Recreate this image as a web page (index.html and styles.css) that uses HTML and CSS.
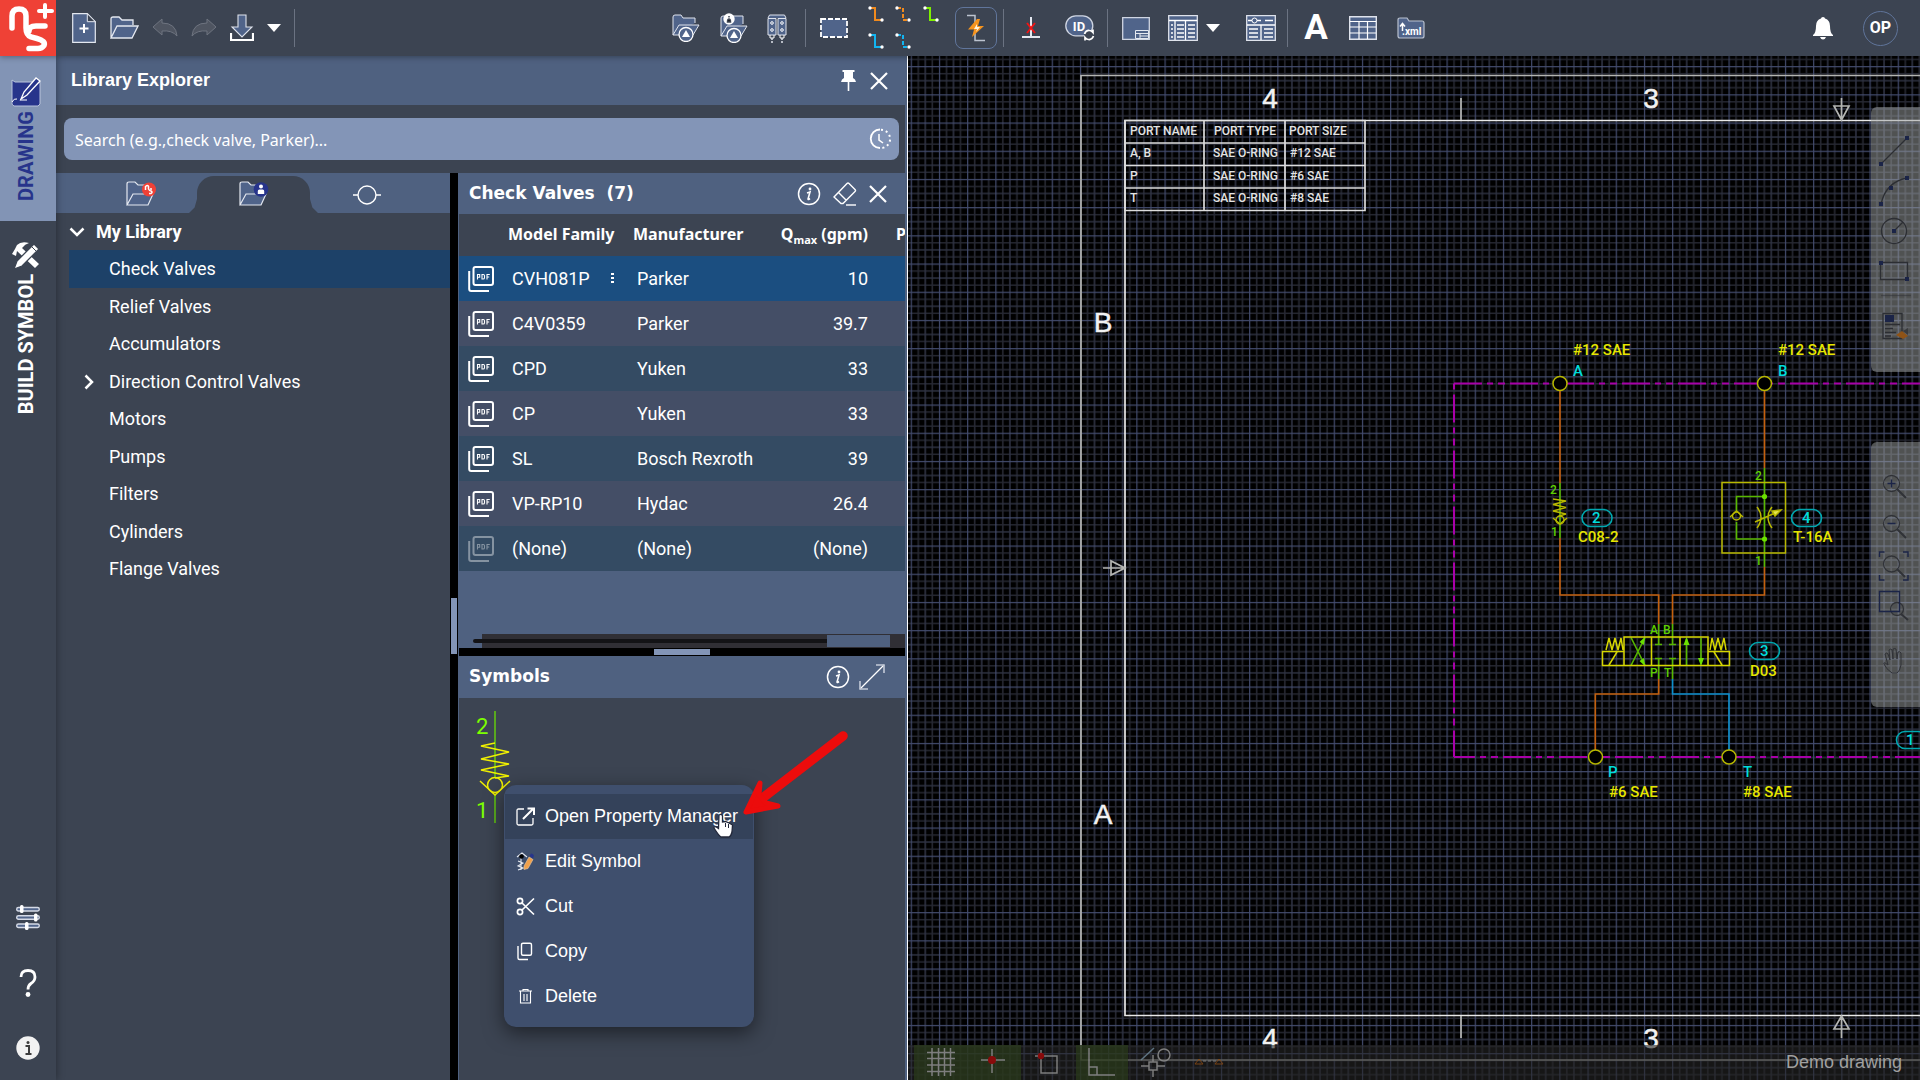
FILE: index.html
```html
<!DOCTYPE html>
<html lang="en">
<head>
<meta charset="utf-8">
<title>Demo drawing</title>
<link rel="stylesheet" href="styles.css">
</head>
<body>
<svg class="defs" aria-hidden="true">
  <symbol id="i-folder" viewBox="0 0 30 24"><path d="M2 22V3q0-2 2-2h6l3 3h11v5M2 22L8 10h21l-6 12z" fill="#50648a" stroke="#e4e8f0" stroke-width="1.3"/></symbol>
  <symbol id="i-x" viewBox="0 0 18 18"><path d="M1 1l16 16M17 1L1 17" stroke="#fff" stroke-width="2.2" fill="none"/></symbol>
  <symbol id="i-caret" viewBox="0 0 14 8"><path d="M0 0h14L7 8z" fill="#fff"/></symbol>
  <symbol id="i-info" viewBox="0 0 24 24"><circle cx="12" cy="12" r="10.5" fill="none" stroke="#fff" stroke-width="1.5"/><circle cx="13" cy="7" r="1.4" fill="#fff"/><path d="M10 11l3-1-2 7q0 1 2-.5" fill="none" stroke="#fff" stroke-width="1.6"/></symbol>
  <symbol id="i-pdf" viewBox="0 0 26 26"><path d="M7.500 1h15.500q2 0 2 2v14q0 2-2 2H7.500q-2 0-2-2v-14q0-2 2-2zM1.200 5v18q0 2 2 2H21" fill="none" stroke="#fff" stroke-width="2"/><path d="M9.500 13.500v-5h2.200v2.800H9.700M14 8.500v4.500h1.200q1.300 0 1.300-1.300v-2q0-1.200-1.300-1.200zM19 13.500v-5h2.800M19 11h2.200" fill="none" stroke="#fff" stroke-width="1.100"/></symbol>
</svg>

<header class="topbar">
  <a class="logo" href="#" aria-label="Home">
    <svg width="56" height="56" viewBox="0 0 56 56"><path d="M12 28V16q0-7 7-7t7 7v12q0 7 5 9l6 1.500q9 2.500 7 7-2 3-6 3h-9M45 26H36q-7 0-7 5" fill="none" stroke="#fff" stroke-width="5.500" stroke-linecap="round"/><path d="M45 5v12M39 11h13" stroke="#fff" stroke-width="4" stroke-linecap="round"/></svg>
  </a>
  <div class="tools tools-file">
    <button aria-label="New"><svg width="24" height="30" viewBox="0 0 24 30"><path d="M.7.700h14.600l8 8v20.600H.7z" fill="#50648a" stroke="#e4e8f0" stroke-width="1.200"/><path d="M15.300.700v8h8z" fill="#3c4452" stroke="#e4e8f0" stroke-width="1"/><path d="M12 11v9M7.500 15.500h9" stroke="#fff" stroke-width="2"/></svg></button>
    <button aria-label="Open"><svg width="30" height="24"><use href="#i-folder"/></svg></button>
    <button aria-label="Undo"><svg width="26" height="20" viewBox="0 0 26 20"><path d="M1 9L10 1v4q14 0 15 13-5-6-15-5v4z" fill="#4f5561" stroke="#6e7480"/></svg></button>
    <button aria-label="Redo"><svg width="26" height="20" viewBox="0 0 26 20"><path d="M25 9L16 1v4q-14 0-15 13 5-6 15-5v4z" fill="#4f5561" stroke="#6e7480"/></svg></button>
    <button aria-label="Save"><svg width="24" height="28" viewBox="0 0 24 28"><path d="M8 1h8v12h6L12 23 2 13h6z" fill="#50648a" stroke="#dfe3ec" stroke-width="1.100"/><path d="M1 19v7h22v-7" fill="none" stroke="#fff" stroke-width="2.200"/></svg></button>
    <button aria-label="Save options"><svg width="14" height="8"><use href="#i-caret"/></svg></button>
    <span class="sep"></span>
  </div>
  <div class="tools tools-lib">
    <button aria-label="Library"><svg width="29" height="28" viewBox="0 0 29 28"><path d="M2 21V3q0-2 2-2h6l2 3h12v5M2 21L8 11h20l-6 10z" fill="#50648a" stroke="#dfe3ec"/><circle cx="15" cy="20.500" r="7" fill="#50648a" stroke="#fff" stroke-width="1.300"/><path d="M15 16l4 7h-8z" fill="#fff"/></svg></button>
    <button aria-label="User library"><svg width="29" height="30" viewBox="0 0 29 30"><path d="M2 23V5q0-2 2-2h20v8M2 23L8 13h20l-6 10z" fill="#50648a" stroke="#dfe3ec"/><circle cx="10" cy="6" r="5.700" fill="#fff"/><path d="M10 3v1.500M8.500 9q0-3 1.500-3t1.500 3z" stroke="#3c4452" stroke-width="1.500"/><circle cx="15" cy="22.500" r="7" fill="#50648a" stroke="#fff" stroke-width="1.300"/><path d="M15 18l4 7h-8z" fill="#fff"/></svg></button>
    <button aria-label="Manifold"><svg width="20" height="29" viewBox="0 0 20 29"><path d="M1 4.500h8V21H1zM11 4.500h8V21h-8zM1 4l1.500-3h15L19 4" fill="#50648a" stroke="#dfe3ec"/><path d="M3 21v3h4v-3M13 21v3h4v-3" fill="none" stroke="#fff"/><path d="M5 24v5M15 24v5" stroke="#dfe3ec" stroke-width="1.500" stroke-dasharray="2 1"/><g fill="none" stroke="#fff"><circle cx="5" cy="9" r="1.300"/><circle cx="5" cy="16" r="1.300"/><circle cx="15" cy="9" r="1.300"/><circle cx="15" cy="16" r="1.300"/></g></svg></button>
  </div>
  <span class="sep"></span>
  <div class="tools tools-line">
    <button aria-label="Select area"><svg width="28" height="20" viewBox="0 0 28 20"><rect x="1" y="1" width="26" height="18" fill="#50648a" stroke="#fff" stroke-width="1.800" stroke-dasharray="5 2"/></svg></button>
    <button aria-label="Line types"><svg width="71" height="44" viewBox="0 0 71 44"><g fill="none" stroke-width="2"><path d="M2 2h5v12h6" stroke="#f08a1d"/><path d="M29 2h6v12h5" stroke="#f08a1d" stroke-dasharray="4 2"/><path d="M57 2h5v12h6" stroke="#7ef000"/><path d="M2 29h5v12h6" stroke="#12b4f0"/><path d="M29 29h6v12h5" stroke="#12b4f0" stroke-dasharray="4 2"/></g><g fill="#fff"><circle cx="2" cy="2" r="1.700"/><circle cx="14" cy="14" r="1.700"/><circle cx="29" cy="2" r="1.700"/><circle cx="41" cy="14" r="1.700"/><circle cx="57" cy="2" r="1.700"/><circle cx="69" cy="14" r="1.700"/><circle cx="2" cy="29" r="1.700"/><circle cx="14" cy="41" r="1.700"/><circle cx="29" cy="29" r="1.700"/><circle cx="41" cy="41" r="1.700"/></g></svg></button>
    <button class="active" aria-label="Auto route"><svg width="20" height="28" viewBox="0 0 20 28"><path d="M1 1.500h8v25h10" fill="none" stroke="#bcc3d0" stroke-width="1.500"/><path d="M11 5L2 15.500h6L6 23 18 12h-6l2-7z" fill="#f7941d"/><path d="M11 10l-3 5h3l-1 3 4-5h-3z" fill="#fff3dd"/></svg></button>
  </div>
  <span class="sep"></span>
  <div class="tools tools-id">
    <button aria-label="Disconnect"><svg width="18" height="22" viewBox="0 0 18 22"><path d="M9 0v20M0 20h18" stroke="#e4e8f0" stroke-width="2"/><path d="M5 6l8 10M13 6L5 16" stroke="#f01414" stroke-width="2"/></svg></button>
    <button aria-label="Refresh IDs"><svg width="30" height="27" viewBox="0 0 30 27"><rect x=".8" y=".8" width="27" height="20" rx="10" fill="#50648a" stroke="#cfd5e2" stroke-width="1.300"/><text x="14" y="16" class="t-id">ID</text><circle cx="24" cy="20" r="5" fill="#3c4452"/><path d="M19.500 19q1.500-4 5-3.500 2 0 3.500 2v-3M28.500 21q-1.500 4-5 3.500-2 0-3.500-2v3" fill="none" stroke="#fff" stroke-width="1.700"/></svg></button>
  </div>
  <span class="sep"></span>
  <div class="tools tools-sheet">
    <button aria-label="Title block"><svg width="28" height="23" viewBox="0 0 28 23"><path d="M.7.700h26.600v21.600H.7z" fill="#50648a" stroke="#cfd5e2" stroke-width="1.300"/><path d="M13.500 13.500h13v8h-13zM13.500 16.500h13M18 16.500v5M18 19h8" fill="none" stroke="#e4e8f0"/></svg></button>
    <button class="with-caret" aria-label="Bill of materials"><svg width="30" height="26" viewBox="0 0 30 26"><path d="M.7.700h28.600v24.600H.7z" fill="#50648a" stroke="#dfe3ec" stroke-width="1.300"/><path d="M1 5.500h28M7 5.500V25M17.500 5.500V25M9 10h7M9 14h7M9 18h7M9 22h7M20 10h7M20 14h7M20 18h7M20 22h7M3 10h2M3 14h2M3 18h2M3 22h2" stroke="#fff" stroke-width="1.300"/></svg><svg width="14" height="8"><use href="#i-caret"/></svg></button>
    <button aria-label="Legend"><svg width="30" height="26" viewBox="0 0 30 26"><path d="M.7.700h28.600v24.600H.7z" fill="#50648a" stroke="#dfe3ec" stroke-width="1.300"/><path d="M1 10h28M15 10v15M3 14h9M3 18h9M3 22h9M18 14h9M18 18h9M18 22h9M2 5.500h4M11 5.500h4M19 5.500h8" stroke="#fff" stroke-width="1.300"/><circle cx="8.500" cy="5.500" r="2.500" fill="none" stroke="#fff"/></svg></button>
  </div>
  <span class="sep"></span>
  <div class="tools tools-text">
    <button class="letter">A</button>
    <button aria-label="Table"><svg width="28" height="24" viewBox="0 0 28 24"><path d="M.7.700h26.600v22.600H.7z" fill="#50648a" stroke="#dfe3ec" stroke-width="1.400"/><path d="M1 5.500h26M1 11h26M1 17h26M10 5.500V23M18.500 5.500V23" stroke="#fff" stroke-width="1.200"/></svg></button>
    <button aria-label="XML export"><svg width="28" height="22" viewBox="0 0 28 22"><path d="M1 19V3q0-2 2-2h7l2 3h13q2 0 2 2v13q0 2-2 2H3q-2 0-2-2z" fill="#50648a" stroke="#b9c1d0" stroke-width="1.200"/><path d="M5.500 14V7M3 9.500L5.500 6.500 8 9.500" fill="none" stroke="#fff" stroke-width="1.500"/><text x="5" y="18" class="t-xml">.xml</text></svg></button>
  </div>
  <div class="tools tools-user">
    <button aria-label="Notifications"><svg width="22" height="24" viewBox="0 0 22 24"><path d="M11 1q2 0 2 1.500 5 1.500 5 7.500 0 7 3 9v1H1v-1q3-2 3-9 0-6 5-7.500Q9 1 11 1zM8 21h6q-1 2.500-3 2.500T8 21z" fill="#fff"/></svg></button>
    <button class="avatar">OP</button>
  </div>
</header>

<div class="workspace">
  <nav class="rail">
    <a class="rail-tab selected" href="#">
      <svg width="30" height="30" viewBox="0 0 30 30"><path d="M1 3l3 2h25v22l-2 2H3q-3-1-2-5z" fill="#27348b" stroke="#b9c3dc"/><path d="M10 22l3-7L25 1l4 3-13 14z" fill="#27348b" stroke="#fff" stroke-width="1.300"/><path d="M9 23h7M1 25q2-4 5-3" stroke="#fff" fill="none"/></svg>
      <span>DRAWING</span>
    </a>
    <a class="rail-tab" href="#">
      <svg width="28" height="28" viewBox="0 0 28 28"><path d="M5 9l18 17 4-4L10 6q3-4 7-5-8-2-12 2L3 7 0 12l4 2z" fill="#fff"/><path d="M22 2L5 19 2 27l8-3L27 7z" fill="#fff" stroke="#3c4452" stroke-width="1.300"/><path d="M20 5l4 4" stroke="#3c4452"/></svg>
      <span>BUILD SYMBOL</span>
    </a>
    <div class="rail-bottom">
      <button aria-label="Settings"><svg width="24" height="25" viewBox="0 0 24 25"><g fill="#50648a" stroke="#d5dae6" stroke-width="1.400"><rect x=".7" y="2.500" width="22.600" height="3.500" rx="1.700"/><rect x=".7" y="10.700" width="22.600" height="3.500" rx="1.700"/><rect x=".7" y="19" width="22.600" height="3.500" rx="1.700"/></g><g fill="#fff"><rect x="4" y="0" width="3.500" height="8" rx="1.500"/><rect x="18" y="8.500" width="3.500" height="8" rx="1.500"/><rect x="9" y="17" width="3.500" height="8" rx="1.500"/></g></svg></button>
      <button aria-label="Help"><svg width="18" height="28" viewBox="0 0 18 28"><path d="M2 8q0-6.500 7-6.500T16 8q0 4-4 6.500-3 2-3 6" fill="none" stroke="#fff" stroke-width="2.800"/><circle cx="9" cy="25.500" r="2.400" fill="#fff"/></svg></button>
      <button aria-label="About"><svg width="24" height="24" viewBox="0 0 24 24"><circle cx="12" cy="12" r="11.700" fill="#f2f2f2"/><path d="M9.500 10h3.500v7.500M9.500 18h6" fill="none" stroke="#3d3d3d" stroke-width="2"/><circle cx="12" cy="6.500" r="1.500" fill="#3d3d3d"/></svg></button>
    </div>
  </nav>

  <section class="explorer">
    <div class="bar bar-title">
      <h1>Library Explorer</h1>
      <button aria-label="Pin"><svg width="15" height="21" viewBox="0 0 15 21"><path d="M1.500 0h12v2h-1.500v6q2.500 1 3 4H0q.5-3 3-4V2H1.500zM6.700 12h1.600v9H6.700z" fill="#fff"/></svg></button>
      <button aria-label="Close"><svg width="18" height="18"><use href="#i-x"/></svg></button>
    </div>
    <div class="search">
      <input type="search" aria-label="Search" placeholder="Search (e.g.,check valve, Parker)...">
      <svg width="22" height="22" viewBox="0 0 22 22"><path d="M11 1.500A9 9 0 0 0 11 20" fill="none" stroke="#fff" stroke-width="1.800"/><path d="M12 1.800a9 9 0 0 1 0 18.200" fill="none" stroke="#fff" stroke-width="2" stroke-dasharray="2 3"/><path d="M10 6v6l4 3" fill="none" stroke="#fff" stroke-width="1.500"/></svg>
    </div>
    <div class="split">
      <div class="library">
        <div class="lib-tabs">
          <button aria-label="Shared library"><svg width="32" height="28" viewBox="0 0 32 28"><path d="M2 24V3q0-2 2-2h6l3 3h12v6M2 24L8 13h20l-5 11z" fill="#50648a" stroke="#e4e8f0" stroke-width="1.200"/><circle cx="24" cy="8.500" r="7" fill="#ef4136"/><path d="M20.500 9V5.500q2.500-2 3 0V8q1 2 2.500 2 2 1 0 2.500h-2M27 8h-2" fill="none" stroke="#fff" stroke-width="1.500"/></svg></button>
          <button class="selected" aria-label="My library"><svg width="32" height="28" viewBox="0 0 32 28"><path d="M2 24V3q0-2 2-2h6l3 3h12v6M2 24L8 13h20l-5 11z" fill="#50648a" stroke="#e4e8f0" stroke-width="1.200"/><circle cx="23" cy="8.500" r="7.300" fill="#27348b"/><circle cx="23" cy="5.500" r="2" fill="#fff"/><path d="M19.800 13V10q0-1.500 1.500-1.500h3.400q1.500 0 1.500 1.500v3z" fill="#fff"/></svg></button>
          <button aria-label="Ports"><svg width="30" height="20" viewBox="0 0 30 20"><circle cx="15" cy="10" r="9" fill="none" stroke="#fff" stroke-width="1.400"/><path d="M1 10h5M24 10h5" stroke="#fff" stroke-width="1.400"/></svg></button>
        </div>
        <ul class="tree">
          <li class="root"><svg width="16" height="10" viewBox="0 0 16 10"><path d="M1.500 1.500L8 8l6.500-6.500" fill="none" stroke="#fff" stroke-width="2.500"/></svg><a href="#">My Library</a></li>
          <li class="selected"><a href="#">Check Valves</a></li>
          <li><a href="#">Relief Valves</a></li>
          <li><a href="#">Accumulators</a></li>
          <li><svg width="10" height="16" viewBox="0 0 10 16"><path d="M1.500 1.500L8 8l-6.500 6.500" fill="none" stroke="#fff" stroke-width="2.500"/></svg><a href="#">Direction Control Valves</a></li>
          <li><a href="#">Motors</a></li>
          <li><a href="#">Pumps</a></li>
          <li><a href="#">Filters</a></li>
          <li><a href="#">Cylinders</a></li>
          <li><a href="#">Flange Valves</a></li>
        </ul>
      </div>
      <div class="divider-v"><span></span></div>
      <div class="details">
        <div class="bar bar-sub">
          <h2>Check Valves&nbsp; (7)</h2>
          <button aria-label="Info"><svg width="24" height="24"><use href="#i-info"/></svg></button>
          <button aria-label="Clear"><svg width="24" height="24" viewBox="0 0 24 24"><path d="M14 1.500q1-1 2 0l6 6q1 1 0 2L10 21.500H8L1 15zM5.500 10.500l8 8" fill="none" stroke="#fff" stroke-width="1.400"/><path d="M13 23h10" stroke="#fff" stroke-width="1.400"/></svg></button>
          <button aria-label="Close"><svg width="18" height="18"><use href="#i-x"/></svg></button>
        </div>
        <div class="models">
          <table>
            <colgroup><col class="c-doc"><col class="c-name"><col class="c-name"><col class="c-flow"><col></colgroup>
            <thead><tr><th></th><th>Model Family</th><th>Manufacturer</th><th class="num">Q<sub>max</sub> (gpm)</th><th class="last">P</th></tr></thead>
            <tbody>
              <tr class="selected"><td><svg width="26" height="26"><use href="#i-pdf"/></svg></td><td><div class="model">CVH081P<svg width="3" height="11" viewBox="0 0 3 11"><path d="M0 0h3v2H0zM0 4h3v2H0zM0 8h3v2H0z" fill="#fff"/></svg></div></td><td>Parker</td><td class="num">10</td><td></td></tr>
              <tr><td><svg width="26" height="26"><use href="#i-pdf"/></svg></td><td>C4V0359</td><td>Parker</td><td class="num">39.7</td><td></td></tr>
              <tr><td><svg width="26" height="26"><use href="#i-pdf"/></svg></td><td>CPD</td><td>Yuken</td><td class="num">33</td><td></td></tr>
              <tr><td><svg width="26" height="26"><use href="#i-pdf"/></svg></td><td>CP</td><td>Yuken</td><td class="num">33</td><td></td></tr>
              <tr><td><svg width="26" height="26"><use href="#i-pdf"/></svg></td><td>SL</td><td>Bosch Rexroth</td><td class="num">39</td><td></td></tr>
              <tr><td><svg width="26" height="26"><use href="#i-pdf"/></svg></td><td>VP-RP10</td><td>Hydac</td><td class="num">26.4</td><td></td></tr>
              <tr><td><svg class="dim" width="26" height="26"><use href="#i-pdf"/></svg></td><td>(None)</td><td>(None)</td><td class="num">(None)</td><td></td></tr>
            </tbody>
          </table>
        </div>
        <div class="hscroll"><div class="track"><span class="line"></span><span class="thumb"></span></div></div>
        <div class="divider-h"><span></span></div>
        <div class="bar bar-sub bar-symbols">
          <h2>Symbols</h2>
          <button aria-label="Info"><svg width="24" height="24"><use href="#i-info"/></svg></button>
          <button aria-label="Expand"><svg width="26" height="26" viewBox="0 0 26 26"><path d="M1 25L25 1" stroke="#fff" stroke-width="1.200"/><path d="M17 1h8v8M1 17v8h8" fill="none" stroke="#c3cad8" stroke-width="1.600"/></svg></button>
        </div>
        <div class="symbols">
          <svg width="60" height="130" viewBox="459 698 60 130"><path d="M495 711v67M495 795v28" stroke="#59a81f" stroke-width="2"/><path d="M495 743l-14 3 28 6-28 7 28 5-28 6 28 6-14 2M480 781l15 14 15-14" fill="none" stroke="#f0f000" stroke-width="1.500"/><circle cx="495" cy="785" r="7.500" fill="none" stroke="#f0f000" stroke-width="1.500"/><text x="476" y="734" class="t-port">2</text><text x="476" y="818" class="t-port">1</text></svg>
          <div class="menu" role="menu">
            <button class="hover" role="menuitem"><svg width="19" height="19" viewBox="0 0 19 19"><path d="M8 2H2.500Q1 2 1 3.500v13Q1 18 2.500 18h13q1.500 0 1.500-1.500V11" fill="none" stroke="#fff" stroke-width="1.300"/><path d="M7 12L17 2M11.500 1.500H18V8" fill="none" stroke="#fff" stroke-width="2"/></svg>Open Property Manager</button>
            <button role="menuitem"><svg width="19" height="19" viewBox="0 0 19 19"><path d="M1 5l5-4 5 4M5 6v12M2 9l5 2-5 3 5 2-5 2" fill="none" stroke="#e8ebf2" stroke-width="1.100"/><circle cx="5.500" cy="4.500" r="2.300" fill="#000"/><path d="M8 14l5-9 4 2.500-5 9-4 1z" fill="#f0a04b" stroke="#e8c9a5" stroke-width=".6"/><path d="M13.500 4l1.500-2.500q2 0 3 2L17 6.500z" fill="#27348b"/></svg>Edit Symbol</button>
            <button role="menuitem"><svg width="19" height="19" viewBox="0 0 19 19"><g fill="none" stroke="#fff" stroke-width="1.700"><circle cx="4" cy="4" r="2.600"/><circle cx="4" cy="15" r="2.600"/><path d="M6 6l12 11.500M6 13L18 1.500"/></g></svg>Cut</button>
            <button role="menuitem"><svg width="19" height="19" viewBox="0 0 19 19"><path d="M7 1.200h7q1.500 0 1.500 1.500v9q0 1.500-1.500 1.500H7q-1.500 0-1.500-1.500v-9Q5.500 1.200 7 1.200zM2 4v12q0 1.500 1.500 1.500H12" fill="none" stroke="#fff" stroke-width="1.400"/></svg>Copy</button>
            <button role="menuitem"><svg width="19" height="19" viewBox="0 0 19 19"><path d="M3 4h13M7 4V2.500h5V4M4.500 4v12h10V4M8 7v7M11 7v7" fill="none" stroke="#fff" stroke-width="1.100"/></svg>Delete</button>
          </div>
          <svg class="pointer" width="150" height="120" viewBox="705 726 150 120"><path d="M843 736L760 800" fill="none" stroke="#ec0c0c" stroke-width="9.500" stroke-linecap="round"/><path d="M760 783L746 812l32-6-12-3-7-8z" fill="#ec0c0c" stroke="#ec0c0c" stroke-width="5" stroke-linejoin="round"/><path d="M719 815q3-1.500 3.500 1v6l3-.5 3.500 1.500 3.500 2-.5 7q-1 4-3 5h-8q-2-1-7-9 0-3 4.500.5z" fill="#fff" stroke="#23283a" stroke-width="1.300"/><path d="M725.500 823v4M728.500 824v4" stroke="#23283a"/></svg>
        </div>
      </div>
    </div>
  </section>

  <main class="canvas">
    <svg width="100%" height="100%" aria-label="Hydraulic schematic">
      <defs>
        <pattern id="grid" width="28.200" height="28.200" patternUnits="userSpaceOnUse" patternTransform="translate(8.300 9.700)">
          <path d="M7.550 0v28.200M21.650 0v28.200M0 7.550h28.200M0 21.650h28.200" stroke="#262832" stroke-width="1.600"/>
          <path d="M14.600 0v28.200M0 14.600h28.200" stroke="#2e3242" stroke-width="1.600"/>
          <path d="M.6 0v28.200M0 .6h28.200" stroke="#434c6e" stroke-width="1.200"/>
        </pattern>
      </defs>
      <svg x="-908" y="-56" overflow="visible">
        <rect x="908" y="56" width="100%" height="100%" fill="url(#grid)"/>
        <g fill="none" stroke="#b4b5b2" stroke-width="1.700">
          <path d="M3000 75.500H1081V1060H3000"/>
          <path d="M3000 120.500H1125V1015.500H3000" stroke="#e8e8e8"/>
          <path d="M1461 98v22M1461 1016v22M1841.500 98v22M1834 106h15l-7.500 14zM1841.500 1038v-22M1834 1029h15l-7.500-13zM1103 568h22M1111 561v14l14-7z"/>
          <path d="M1125 120.500h240v90h-240zM1125 143h240M1125 165.500h240M1125 188h240M1204 120.500v90M1285 120.500v90" stroke="#dcdcdc"/>
        </g>
        <g class="t-zone"><text x="1270" y="108">4</text><text x="1651" y="108">3</text><text x="1270" y="1048">4</text><text x="1651" y="1048">3</text><text x="1103" y="332">B</text><text x="1103" y="824">A</text></g>
        <g class="t-cell">
          <text x="1130" y="135">PORT NAME</text><text x="1214" y="135">PORT TYPE</text><text x="1289" y="135">PORT SIZE</text>
          <text x="1130" y="157">A, B</text><text x="1213" y="157">SAE O-RING</text><text x="1290" y="157">#12 SAE</text>
          <text x="1130" y="180">P</text><text x="1213" y="180">SAE O-RING</text><text x="1290" y="180">#6 SAE</text>
          <text x="1130" y="202">T</text><text x="1213" y="202">SAE O-RING</text><text x="1290" y="202">#8 SAE</text>
        </g>
        <g fill="none" stroke="#a800a8" stroke-width="2" stroke-dasharray="28 5 6 5 7 5">
          <path d="M1454 383.500H3000"/><path d="M1454 383.500V757" stroke-dashoffset="45"/><path d="M1454 757H3000" stroke-dashoffset="7"/>
        </g>
        <g fill="none" stroke="#c4600c" stroke-width="1.600">
          <path d="M1560 390v93M1560 538v57h98.700v29M1764.500 390v78M1764.500 567v28h-92v29M1658.700 679v15h-63.400v56"/>
          <path d="M1672.500 679v15H1729v56" stroke="#0d8fcc"/>
        </g>
        <g fill="none" stroke="#58b800" stroke-width="1.600">
          <path d="M1560 483v55M1764.500 468v99M1764.500 496.500h-28v16M1736.500 522v17h28M1658.700 624v20M1672.500 624v20M1655 644.500h7M1669 644.500h7M1658.700 679v-20M1672.500 679v-20M1655 658.500h7M1669 658.500h7M1631 637.500l14 28M1631 665.500l14-28M1686.500 665v-26M1701 638v26"/>
          <g fill="#6be000" stroke="none"><circle cx="1764.500" cy="496.500" r="2.600"/><circle cx="1764.500" cy="539" r="2.600"/><path d="M1686.500 637l3 8h-6zM1701 666l3-8h-6zM1645 637l-5.500 5 4.500 3zM1645 666l-5.500-5 4.500-3z"/></g>
        </g>
        <g fill="none" stroke="#b8b800" stroke-width="1.500">
          <circle cx="1560" cy="383.500" r="7" fill="#000"/><circle cx="1764.500" cy="383.500" r="7" fill="#000"/><circle cx="1595.500" cy="757" r="7" fill="#000"/><circle cx="1729" cy="757" r="7" fill="#000"/>
          <path d="M1722 482.500h63.500V553H1722z"/>
          <path d="M1553 499l13 2-13 3.500 13 3-13 3.500 13 3-7 2M1553 518l7 6 7-6M1730 517l6.500-6 6.500 6"/>
          <circle cx="1560" cy="520" r="4"/><circle cx="1736.500" cy="516" r="4"/>
          <path d="M1757 507q8 10 0 21M1772 507q-8 10 0 21M1755 522l20-9"/><path d="M1781 510l-9 1 3 5z" fill="#e8e850"/>
          <path d="M1624 637h84v28.500h-84zM1651.500 637v28.500M1680 637v28.500M1602.500 651.500h21.500v14h-21.500zM1708 651.500h21.500v14H1708zM1609 665l8-13M1722 665l-8-13M1606 650l3-12 3 12 3-12 3 12 3-12 2 12M1710 650l2-12 3 12 3-12 3 12 3-12 2 12" stroke="#d6d600"/>
        </g>
        <g fill="none" stroke="#00a8b0" stroke-width="1.600"><rect x="1582" y="509.500" width="30" height="17" rx="8.500"/><rect x="1791.500" y="509.500" width="30" height="17" rx="8.500"/><rect x="1749.500" y="642.500" width="30" height="17" rx="8.500"/><rect x="1896.500" y="731.500" width="30" height="17" rx="8.500"/></g>
        <g class="t-note"><text x="1573" y="355">#12 SAE</text><text x="1778" y="355">#12 SAE</text><text x="1578" y="542">C08-2</text><text x="1793" y="542">T-16A</text><text x="1750" y="676">D03</text><text x="1609" y="797">#6 SAE</text><text x="1743" y="797">#8 SAE</text></g>
        <g class="t-tag"><text x="1573" y="376">A</text><text x="1778" y="376">B</text><text x="1608" y="777">P</text><text x="1743" y="777">T</text><text x="1592" y="523">2</text><text x="1802" y="523">4</text><text x="1760" y="656">3</text><text x="1906" y="745">1</text></g>
        <g class="t-pin"><text x="1550" y="494">2</text><text x="1551" y="536">1</text><text x="1755" y="480">2</text><text x="1755" y="565">1</text><text x="1650" y="634">A</text><text x="1663" y="634">B</text><text x="1650" y="677">P</text><text x="1664" y="677">T</text></g>
      </svg>
    </svg>
    <div class="palette palette-draw">
      <svg width="49" height="265" viewBox="1871 107 49 265"><g fill="none" stroke="#2c2e33" stroke-width="1.300"><path d="M1881 164l26-26M1881 204q5-22 26-26"/><circle cx="1894" cy="231" r="12.500"/><path d="M1894 231l9-9M1880.500 262.500h27v17h-27z"/><path d="M1881 295.500h30" opacity=".5"/><path d="M1883 313.500h19v25h-19zM1885 324.500h15M1885 328.500h8M1885 332.500h11M1885 336h6"/></g><g fill="#1b2447"><path d="M1879 162h4v4h-4zM1905 136h4v4h-4zM1879 202h4v4h-4zM1889 186h4v4h-4zM1905 176h4v4h-4zM1892 229h4v4h-4zM1879 261h4v4h-4zM1905 277h4v4h-4zM1885 315h9v7h-9z"/></g><path d="M1896 335l6-4 6 5-5 3z" fill="#8f5316"/><path d="M1903 331l5-3v7z" fill="#3a3b3d"/></svg>
    </div>
    <div class="palette palette-zoom">
      <svg width="49" height="265" viewBox="1871 442 49 265"><g fill="none" stroke="#303237" stroke-width="1.300"><circle cx="1891.500" cy="483.500" r="8"/><circle cx="1891.500" cy="523.500" r="8"/><circle cx="1891.500" cy="564" r="8"/><circle cx="1897" cy="609" r="6.500"/><path d="M1897 489l9 9M1897 529l9 9M1897 569l8 8M1901 614l7 6" stroke-width="2"/><path d="M1888 665l-3-11q2-2 3 0l2 6-1-10q2-2 3 0l1 9v-10q2-1 3 0l1 10 1-7q2-1 3 1v12q-1 6-4 8h-5q-6-4-8-9-1-3 4 1z" stroke-width="1"/></g><g fill="none" stroke="#1b2447" stroke-width="1.400"><path d="M1887.500 483.500h8M1891.500 479.500v8M1887.500 523.500h8M1879.500 557v-5h5M1903 552h5v5M1879.500 575v5h5M1903 580h5v-5M1879.500 591.500h20v20h-20z"/></g></svg>
    </div>
    <footer class="snapbar">
      <svg width="345" height="35" viewBox="908 1045 345 35"><path d="M914 1045h107v35H914zM1076 1045h52v35h-52z" fill="#2c3d1c" opacity=".8"/><g fill="none" stroke="#8f8f8f" stroke-width="1.500"><path d="M932 1048v28M938.500 1048v28M944.500 1048v28M950.500 1048v28M927 1052.500h28M927 1058.500h28M927 1065h28M927 1071.500h28M981 1060h24M992 1049v24M1041 1056v17h16v-17zM1035 1056h6v-6M1089 1048v27h26M1089 1067h8v8"/><path d="M1141 1066h8M1157 1066h8M1153 1055v7M1153 1070v7M1149 1062h8v8h-8z"/><path d="M1141 1060l13-12" stroke="#6b8494"/><circle cx="1164" cy="1055" r="6"/></g><circle cx="992" cy="1060" r="4" fill="#9c0808"/><circle cx="1041" cy="1056" r="3.200" fill="#9c0808"/><path d="M1195 1064h8l-4-5zM1215 1064h8l-4-5z" fill="none" stroke="#8a4a14"/><path d="M1203 1061h13" stroke="#888" stroke-dasharray="3 2"/></svg>
      <span>Demo drawing</span>
    </footer>
  </main>
</div>
</body>
</html>
```
FILE: styles.css
```css
* { box-sizing: border-box; }

html, body { height: 100%; margin: 0; }

body {
  display: flex;
  flex-direction: column;
  overflow: hidden;
  background: #3c4452;
  color: #fff;
  font: 18px/22px Roboto, "Liberation Sans", sans-serif;
}

button {
  display: flex;
  align-items: center;
  justify-content: center;
  padding: 0;
  border: 0;
  background: none;
  color: inherit;
  font: inherit;
}

a { color: inherit; text-decoration: none; }
h1, h2 { margin: 0; }
svg { display: block; flex: none; }
.defs { position: absolute; width: 0; height: 0; }

/* top toolbar */
.topbar {
  position: relative;
  z-index: 3;
  display: flex;
  align-items: center;
  flex: none;
  height: 56px;
  background: #3c4452;
  box-shadow: 0 1px 6px rgba(0, 0, 0, .35);
}
.logo { width: 56px; height: 56px; background: #ef4136; }
.tools { display: flex; align-items: center; }
.sep { flex: none; width: 1px; height: 38px; background: #6b7382; }
.tools-file { gap: 13px; padding-left: 16px; }
.tools-lib { gap: 19px; margin-left: 376px; padding-right: 18px; }
.tools-line { gap: 16px; padding: 0 6px 0 14px; }
.tools-line button:nth-child(2) { padding-left: 4px; }
.tools-id { gap: 25px; padding: 0 12px 0 18px; }
.tools-sheet { gap: 18px; padding: 0 11px 0 14px; }
.with-caret { gap: 8px; margin-right: 8px; }
.tools-text { gap: 20px; padding-left: 15px; }
.tools-user { gap: 29px; margin-left: auto; padding-right: 22px; }
.active {
  width: 42px;
  height: 42px;
  border: 1px solid #60759b;
  border-radius: 8px;
}
.letter { width: 26px; font-size: 35px; font-weight: 700; line-height: 40px; }
.avatar {
  width: 35px;
  height: 35px;
  border: 1px solid #60759b;
  border-radius: 50%;
  font-size: 16px;
  font-weight: 700;
}
.t-id { fill: #fff; font: 700 13px Roboto, sans-serif; text-anchor: middle; }
.t-xml { fill: #fff; font: 700 10px Roboto, sans-serif; }

.workspace { display: flex; flex: 1; min-height: 0; }

/* left rail */
.rail {
  position: relative;
  z-index: 2;
  display: flex;
  flex-direction: column;
  flex: none;
  width: 56px;
  background: #3c4452;
  box-shadow: 0 0 8px rgba(0, 0, 0, .4);
}
.rail-tab {
  display: flex;
  flex-direction: column;
  align-items: center;
  gap: 4px;
  padding: 21px 4px 21px 0;
  font-size: 20px;
  font-weight: 700;
  line-height: 24px;
}
.rail-tab span { writing-mode: vertical-rl; transform: rotate(180deg); }
.rail-tab.selected { height: 165px; background: #8294b5; color: #27348b; }
.rail-bottom {
  display: flex;
  flex-direction: column;
  align-items: center;
  gap: 39px;
  margin-top: auto;
  padding-bottom: 20px;
}

/* library explorer */
.explorer {
  display: flex;
  flex-direction: column;
  flex: none;
  width: 852px;
  padding-right: 2px;
  border-right: 1px solid #fff;
  background: #4f6180;
}
.bar { display: flex; align-items: center; flex: none; background: #4f6180; }
.bar h1, .bar h2 { flex: 1; padding-bottom: 2px; }
.bar h1 { font: 700 18px/22px "Liberation Sans", sans-serif; }
.bar h2 { font: 700 17px/22px "DejaVu Sans", sans-serif; }
.bar-title { gap: 14px; height: 49px; padding: 0 17px 0 15px; }
.search {
  display: flex;
  align-items: center;
  padding: 13px 6px 13px 8px;
  background: #3c4452;
}
.search input {
  flex: 1;
  height: 42px;
  padding: 2px 44px 0 11px;
  border: 0;
  border-radius: 8px;
  background: #8395b7;
  color: #fff;
  font: 16px "Noto Sans", sans-serif;
}
.search input::placeholder { color: #fff; opacity: 1; }
.search svg { margin-left: -30px; margin-right: 8px; }
.split { display: flex; flex: 1; min-height: 0; }

.library { display: flex; flex-direction: column; flex: none; width: 394px; background: #3c4452; }
.lib-tabs { display: flex; flex: none; height: 40px; padding: 3px 0 0 28px; background: #4f6180; }
.lib-tabs button { position: relative; width: 113px; }
.lib-tabs .selected { border-radius: 17px 17px 0 0; background: #3c4452; }
.lib-tabs .selected::before,
.lib-tabs .selected::after { content: ""; position: absolute; bottom: 0; width: 8px; height: 14px; background: #3c4452; }
.lib-tabs .selected::before { left: -8px; clip-path: polygon(100% 0, 70% 60%, 0 100%, 100% 100%); }
.lib-tabs .selected::after { right: -8px; clip-path: polygon(0 0, 30% 60%, 100% 100%, 0 100%); }

.tree {
  display: grid;
  grid-auto-rows: 37px 38px;
  margin: 0;
  padding-left: 13px;
  list-style: none;
}
.tree li { display: flex; align-items: center; padding-left: 40px; }
.tree svg { width: 10px; margin: 0 15px 0 -25px; }
.tree .root { padding-left: 0; font-weight: 700; }
.tree .root svg { width: 16px; margin: 0 11px 0 0; }
.tree .selected { background: #1d4168; }

.divider-v { display: flex; align-items: center; justify-content: center; width: 8px; background: #000; }
.divider-v span { width: 6px; height: 56px; margin-bottom: 2px; background: #8395b7; }

.details { display: flex; flex-direction: column; flex: 1; min-width: 0; padding-left: 1px; }
.bar-sub { gap: 12px; height: 41px; padding: 0 18px 0 10px; }
.bar-symbols { gap: 9px; height: 42px; padding-right: 20px; }
.models { height: 420px; overflow: hidden; }
table { width: 100%; table-layout: fixed; border-collapse: collapse; }
.c-doc { width: 49px; }
.c-name { width: 125px; }
.c-flow { width: 110px; }
th, td { padding: 0; text-align: left; white-space: nowrap; }
th { height: 42px; padding-bottom: 2px; background: #3c4452; font: 700 16px/22px "Noto Sans", sans-serif; }
th sub { font-size: 11px; line-height: 1px; }
th.last { padding-left: 28px; overflow: hidden; }
td { height: 45px; padding-left: 4px; }
td:first-child { padding-left: 9px; }
.num { text-align: right; }
tbody tr { background: #344b63; }
tbody tr:nth-child(even) { background: #444e66; }
tbody tr.selected { background: #1b4e80; }
.model { display: flex; align-items: center; justify-content: space-between; padding-right: 19px; }
.dim { opacity: .4; }

.hscroll { flex: none; height: 14px; padding-left: 14px; }
.track { display: flex; align-items: center; height: 14px; background: linear-gradient(90deg, #4f6180 9px, #302f35 9px); }
.line { flex: 1; height: 4px; border-radius: 2px 0 0 2px; background: #131316; }
.thumb { width: 63px; height: 12px; margin-right: 15px; background: #4f6180; }
.divider-h { display: flex; align-items: center; justify-content: center; flex: none; height: 8px; background: #000; }
.divider-h span { width: 56px; height: 6px; background: #8395b7; }

.symbols { position: relative; flex: 1; background: #3c4452; }
.t-port { fill: #7cff00; font: 22px Roboto, sans-serif; }
.menu {
  position: absolute;
  top: 87px;
  left: 45px;
  width: 250px;
  padding: 9px 1px 8px;
  border-radius: 12px;
  background: #3f4f6d;
  box-shadow: 0 6px 20px rgba(0, 0, 0, .5);
}
.menu button {
  justify-content: flex-start;
  gap: 10px;
  width: 100%;
  height: 45px;
  padding-left: 11px;
  font: 18px "Liberation Sans", sans-serif;
}
.menu .hover { background: #34425a; }
.pointer { position: absolute; top: 28px; left: 246px; }

/* drawing canvas */
.canvas { position: relative; flex: 1; min-width: 0; overflow: hidden; background: #000; }
.t-zone { fill: #f2f2f2; font: 28px "Liberation Sans", sans-serif; text-anchor: middle; stroke: #f2f2f2; stroke-width: .5px; }
.t-cell { fill: #e4e4e4; font: 500 12px Roboto, sans-serif; }
.t-note { fill: #e6e600; font: 500 15px Roboto, sans-serif; }
.t-tag { fill: #00dcdc; font: 500 15px Roboto, sans-serif; }
.t-pin { fill: #5fd000; font: 500 12px Roboto, sans-serif; }
.palette {
  position: absolute;
  right: 0;
  border-radius: 6px 0 0 6px;
  background: rgba(160, 163, 163, .5);
}
.palette-draw { top: 51px; }
.palette-zoom { top: 386px; }
.snapbar {
  position: absolute;
  right: 0;
  bottom: 0;
  left: 0;
  display: flex;
  align-items: center;
  justify-content: space-between;
  height: 35px;
  padding-right: 18px;
  background: rgba(36, 36, 36, .6);
  color: #a0a0a0;
  font: 18px "Liberation Sans", sans-serif;
}
.snapbar svg { opacity: .85; }
```
